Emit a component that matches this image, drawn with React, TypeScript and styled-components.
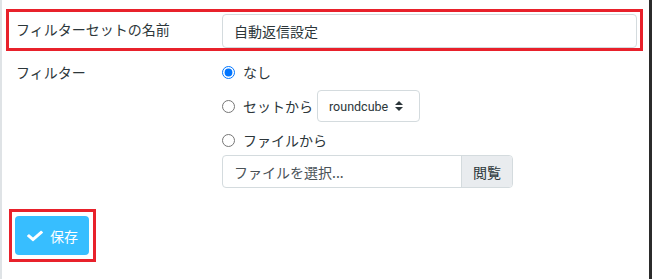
import React from "react";
import styled, { createGlobalStyle } from "styled-components";

const Global = createGlobalStyle`
  html, body { margin: 0; padding: 0; background: #fff; }
  body { font-family: Roboto, "Noto Sans CJK JP", sans-serif; color: #2c363a; }
  * { box-sizing: border-box; }
`;

const Frame = styled.div`
  width: 652px;
  height: 279px;
  border-left: 2px solid #dfe3e6;
  border-right: 3px solid #2b2b2b;
  padding: 12px 9px 0 7px;
  font-size: 14px;
  overflow: hidden;
`;

const Form = styled.form`
  display: block;
`;

const Row = styled.div<{ $marked?: boolean; $top?: number }>`
  display: grid;
  grid-template-columns: 213px 415px;
  align-items: start;
  margin-top: ${(p) => p.$top ?? 0}px;
  padding-top: ${(p) => (p.$marked ? 2 : 0)}px;
  outline: ${(p) => (p.$marked ? "3px solid #e8212b" : "none")};
`;

const Label = styled.div<{ $pt: number }>`
  padding-left: 7px;
  padding-top: ${(p) => p.$pt}px;
  line-height: 20px;
  font-family: "Noto Sans CJK JP", sans-serif;
  font-size: 14px;
  color: #2c363a;
`;

const TextInput = styled.div`
  height: 34px;
  width: 415px;
  border: 1px solid #d4dbde;
  border-radius: 4px;
  padding: 0 11px;
  display: flex;
  align-items: center;
  font-family: "Noto Sans CJK JP", sans-serif;
  font-size: 14px;
  color: #2c363a;
`;

const Options = styled.div`
  display: flex;
  flex-direction: column;
  gap: 6px;
`;

const Option = styled.label<{ $h: number }>`
  display: flex;
  align-items: center;
  height: ${(p) => p.$h}px;
  font-family: "Noto Sans CJK JP", sans-serif;
  font-size: 14px;
  color: #2c363a;
`;

const Radio = styled.input`
  width: 13px;
  height: 13px;
  margin: 0 8px 0 0;
`;

const Select = styled.div`
  margin-left: 4px;
  width: 103px;
  height: 32px;
  border: 1px solid #d4dbde;
  border-radius: 4px;
  padding: 0 0 0 11px;
  display: flex;
  align-items: center;
  gap: 7px;
  font-family: Roboto, sans-serif;
  font-size: 12.5px;
  color: #2c363a;
`;

const FileBox = styled.div`
  margin-top: -3px;
  width: 291px;
  height: 33px;
  border: 1px solid #d4dbde;
  border-radius: 4px;
  display: flex;
  overflow: hidden;
  font-family: "Noto Sans CJK JP", sans-serif;
  font-size: 14px;
`;

const FileName = styled.div`
  flex: 1;
  display: flex;
  align-items: center;
  padding-left: 11px;
  color: #4a5257;
`;

const Browse = styled.div`
  width: 51px;
  background: #e9ecef;
  border-left: 1px solid #d4dbde;
  display: flex;
  align-items: center;
  justify-content: center;
  color: #2c363a;
`;

const SaveWrap = styled.div`
  margin-top: 24px;
  margin-left: 3px;
  display: inline-block;
  padding: 4px 4px 4px 3px;
  outline: 3px solid #e8212b;
`;

const SaveButton = styled.button`
  width: 74px;
  height: 39px;
  border: none;
  border-radius: 4px;
  background: #37beff;
  color: #fff;
  display: flex;
  align-items: center;
  justify-content: center;
  gap: 7px;
  padding: 0 0 0 1px;
  font-family: "Noto Sans CJK JP", sans-serif;
  font-size: 14px;
  cursor: pointer;
`;

const Check = () => (
  <svg width="16" height="14" viewBox="0 0 512 512" preserveAspectRatio="none" aria-hidden="true">
    <path
      fill="#fff"
      d="M173.898 439.404l-166.4-166.4c-9.997-9.997-9.997-26.206 0-36.204l36.203-36.204c9.997-9.998 26.207-9.998 36.204 0L192 312.69 432.095 72.596c9.997-9.997 26.207-9.997 36.204 0l36.203 36.204c9.997 9.997 9.997 26.206 0 36.204l-294.4 294.401c-9.998 9.997-26.207 9.997-36.204-.001z"
    />
  </svg>
);

const Arrows = () => (
  <svg width="8" height="10" viewBox="0 0 8 10" aria-hidden="true">
    <path d="M4 0 L8 4 H0 Z M0 6 H8 L4 10 Z" fill="#2c363a" />
  </svg>
);

export default function App() {
  return (
    <>
      <Global />
      <Frame>
        <Form onSubmit={(e) => e.preventDefault()}>
          <Row $marked>
            <Label $pt={5}>フィルターセットの名前</Label>
            <TextInput>自動返信設定</TextInput>
          </Row>
          <Row $top={12}>
            <Label $pt={2}>フィルター</Label>
            <Options>
              <Option $h={24}>
                <Radio type="radio" name="f" defaultChecked />
                なし
              </Option>
              <Option $h={32}>
                <Radio type="radio" name="f" />
                セットから
                <Select>
                  roundcube
                  <Arrows />
                </Select>
              </Option>
              <Option $h={24}>
                <Radio type="radio" name="f" />
                ファイルから
              </Option>
              <FileBox>
                <FileName>ファイルを選択...</FileName>
                <Browse>閲覧</Browse>
              </FileBox>
            </Options>
          </Row>
          <SaveWrap>
            <SaveButton type="button">
              <Check />
              保存
            </SaveButton>
          </SaveWrap>
        </Form>
      </Frame>
    </>
  );
}
